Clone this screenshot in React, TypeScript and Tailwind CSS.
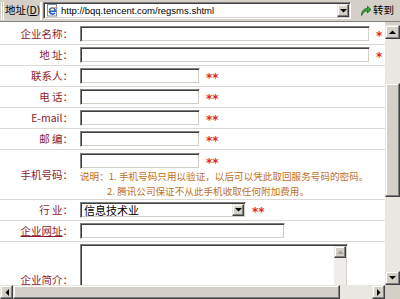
import React from "react";

const raised =
  "bg-[#d4d0c8] border border-t-[#e8e6e0] border-l-[#e8e6e0] border-r-[#404040] border-b-[#404040] shadow-[inset_-1px_-1px_0_#808080,inset_1px_1px_0_#ffffff]";
const sunken =
  "bg-white border border-t-[#808080] border-l-[#808080] border-r-white border-b-white shadow-[inset_1px_1px_0_#404040,inset_-1px_-1px_0_#d4d0c8]";

function Tri({ dir, color = "#000" }: { dir: "up" | "down" | "left" | "right"; color?: string }) {
  const pts = {
    up: "0,4 3.5,0.5 7,4",
    down: "0,0 7,0 3.5,3.5",
    left: "4,0 4,7 0.5,3.5",
    right: "0,0 0,7 3.5,3.5",
  }[dir];
  const w = dir === "up" || dir === "down" ? 7 : 4;
  const h = dir === "up" || dir === "down" ? 4 : 7;
  return (
    <svg width={w} height={h} viewBox={`0 0 ${w} ${h}`}>
      <polygon points={pts} fill={color} />
    </svg>
  );
}

function Stars({ n = 2 }: { n?: number }) {
  return (
    <span className="ml-[6px] text-[12px] leading-[12px] font-bold text-[#e0282e] font-['DejaVu_Sans',sans-serif] whitespace-nowrap translate-y-[2px]">
      {"*".repeat(n)}
    </span>
  );
}

function Row({
  label,
  h,
  top,
  children,
}: {
  label: React.ReactNode;
  h: string;
  top?: boolean;
  children: React.ReactNode;
}) {
  return (
    <div className={`flex ${top ? "items-start" : "items-center"} border-b border-[#dcd9d2] ${h}`}>
      <div className={`w-[78px] shrink-0 pr-[5px] text-right text-[10.5px] text-[#8e1b2e] whitespace-nowrap ${top ? "self-center" : ""}`}>
        {label}
      </div>
      <div className="flex items-center pl-[2px]">{children}</div>
    </div>
  );
}

function Box({ w }: { w: string }) {
  return <div className={`h-[16px] ${w} ${sunken}`} />;
}

export default function App() {
  return (
    <div className="w-[400px] h-[299px] overflow-hidden bg-white flex flex-col font-['Noto_Sans_CJK_SC','Liberation_Sans',sans-serif] text-black">
      {/* address bar */}
      <div className="h-[22px] shrink-0 bg-[#d4d0c8] flex items-center border-b border-[#808080]">
        <div className="ml-[1px] w-[3px] h-[18px] shrink-0 border-l border-white border-r border-[#808080]" />
        <span className="ml-[1px] w-[34px] shrink-0 text-[10.5px] leading-none whitespace-nowrap">
          地址(<span className="underline">D</span>)
        </span>
        <div className="ml-[1px] w-[2px] h-[18px] shrink-0 border-l border-[#808080] border-r border-white" />
        <div className={`ml-[1px] w-[308px] h-[17px] shrink-0 flex items-center ${sunken}`}>
          <svg width="13" height="13" viewBox="0 0 13 13" className="ml-[2px]">
            <rect x="1.5" y="0.5" width="9" height="11.5" fill="#fff" stroke="#7b8aa6" />
            <path d="M4 7.2h5.2c0-2-1.1-3.2-2.7-3.2C4.8 4 3.6 5.4 3.6 7.1c0 1.8 1.3 3 3 3 1.1 0 1.9-.5 2.4-1.2" fill="none" stroke="#1f5fd0" strokeWidth="1.6" />
            <path d="M1 9.5c2-3.5 7-7 10.5-6" fill="none" stroke="#e3a92a" strokeWidth="0.9" />
          </svg>
          <span className="ml-[2px] text-[9.5px] leading-none font-['Liberation_Sans',Arial,sans-serif] flex-1 whitespace-nowrap">
            http://bqq.tencent.com/regsms.shtml
          </span>
          <div className={`w-[12px] h-[13px] mr-[1px] flex items-center justify-center ${raised}`}>
            <Tri dir="down" />
          </div>
        </div>
        <div className="ml-[9px] flex items-center shrink-0">
          <svg width="12" height="12" viewBox="0 0 12 12">
            <path d="M1.5 10.5C1.5 6 4 3.5 7.5 3.5V1.2L11 4.6 7.5 8V5.8C5 5.8 3.3 7.5 1.5 10.5Z" fill="#3aa53a" stroke="#1d5a1d" strokeWidth="0.8" strokeLinejoin="round" />
          </svg>
          <span className="ml-[1px] text-[10.5px] leading-none whitespace-nowrap">转到</span>
        </div>
      </div>

      <div className="flex-1 flex min-h-0">
        <div className="flex-1 flex flex-col min-w-0">
          {/* page content */}
          <div className="flex-1 overflow-hidden">
            <div className="w-[440px] pt-[1px]">
              <Row label="企业名称：" h="h-[22px]">
                <Box w="w-[290px]" />
                <Stars n={1} />
              </Row>
              <Row label="地 址：" h="h-[21px]">
                <Box w="w-[290px]" />
                <Stars n={1} />
              </Row>
              <Row label="联系人：" h="h-[21px]">
                <Box w="w-[120px]" />
                <Stars />
              </Row>
              <Row label="电 话：" h="h-[21px]">
                <Box w="w-[120px]" />
                <Stars />
              </Row>
              <Row label="E-mail：" h="h-[21px]">
                <Box w="w-[120px]" />
                <Stars />
              </Row>
              <Row label="邮 编：" h="h-[21px]">
                <Box w="w-[120px]" />
                <Stars />
              </Row>
              <Row label="手机号码：" h="h-[50px]" top>
                <div className="flex flex-col pt-[3px]">
                  <div className="flex items-center">
                    <Box w="w-[120px]" />
                    <Stars />
                  </div>
                  <div className="text-[9.6px] leading-[15px] text-[#c2701e] whitespace-nowrap">
                    <div>说明：1. 手机号码只用以验证，以后可以凭此取回服务号码的密码。</div>
                    <div className="pl-[27px]">2. 腾讯公司保证不从此手机收取任何附加费用。</div>
                  </div>
                </div>
              </Row>
              <Row label="行 业：" h="h-[21px]">
                <div className={`w-[166px] h-[16px] flex items-center ${sunken}`}>
                  <span className="ml-[3px] flex-1 text-[11px] leading-none">信息技术业</span>
                  <div className={`w-[12px] h-[12px] mr-[1px] flex items-center justify-center ${raised}`}>
                    <Tri dir="down" />
                  </div>
                </div>
                <Stars />
              </Row>
              <Row label={<><span className="underline">企业网址</span>：</>} h="h-[21px]">
                <Box w="w-[205px]" />
              </Row>
              <Row label={<><span className="underline">企业简介</span>：</>} h="h-[76px]">
                <div className={`w-[268px] h-[72px] flex justify-end ${sunken}`}>
                  <div className="w-[12px] mt-[1px] mr-[1px] mb-[1px] flex flex-col bg-[#eeede9]">
                    <div className={`h-[12px] flex items-center justify-center ${raised}`}>
                      <Tri dir="up" color="#a0a0a0" />
                    </div>
                  </div>
                </div>
              </Row>
            </div>
          </div>
          {/* horizontal scrollbar */}
          <div className="h-[14px] shrink-0 flex bg-[#e9e7e1]">
            <div className={`w-[13px] flex items-center justify-center ${raised}`}>
              <Tri dir="left" />
            </div>
            <div className={`w-[327px] ${raised}`} />
            <div className="flex-1" />
            <div className={`w-[13px] flex items-center justify-center ${raised}`}>
              <Tri dir="right" />
            </div>
          </div>
        </div>
        {/* vertical scrollbar */}
        <div className="w-[15px] shrink-0 flex flex-col bg-[#d4d0c8]">
          <div className="flex-1 flex flex-col pt-[3px]">
            <div className={`h-[14px] flex items-center justify-center ${raised}`}>
              <Tri dir="up" />
            </div>
            <div className="h-[44px] bg-[#e9e7e1]" />
            <div className={`h-[114px] ${raised}`} />
            <div className="flex-1 bg-[#e9e7e1]" />
            <div className={`h-[14px] flex items-center justify-center ${raised}`}>
              <Tri dir="down" />
            </div>
          </div>
          <div className="h-[14px] bg-[#d4d0c8]" />
        </div>
      </div>
    </div>
  );
}
